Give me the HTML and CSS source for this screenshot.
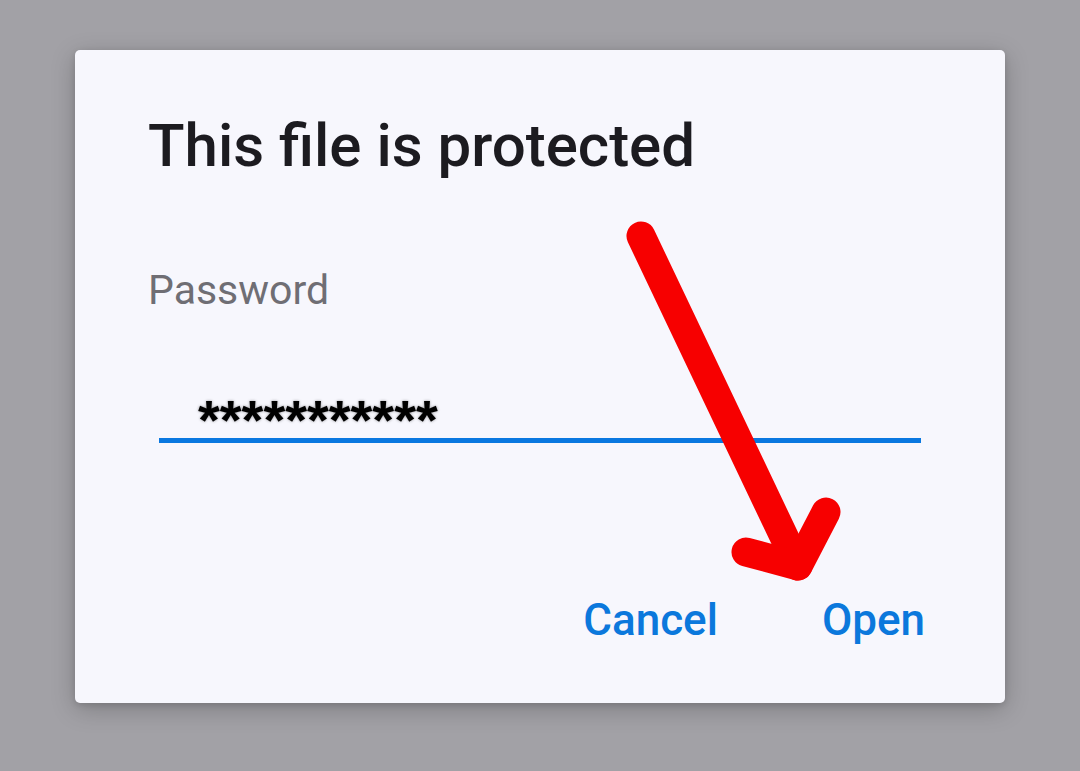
FILE: index.html
```html
<!DOCTYPE html>
<html>
<head>
<meta charset="utf-8">
<link rel="stylesheet" href="styles.css">
</head>
<body>
<div class="dialog">
  <h1 class="title">This file is protected</h1>
  <div class="label">Password</div>
  <div class="field"><span class="dots">***********</span></div>
  <div class="actions">
    <span class="btn">Cancel</span>
    <span class="btn">Open</span>
  </div>
</div>
<svg class="arrow" width="1080" height="771" viewBox="0 0 1080 771">
  <path d="M641 236 L798 566" />
  <path d="M746 552 L798 566 L826 512" />
</svg>
</body>
</html>
```
FILE: styles.css
```css
html, body {
  margin: 0;
  padding: 0;
}
body {
  width: 1080px;
  height: 771px;
  background: #a2a1a6;
  font-family: Roboto, "Liberation Sans", sans-serif;
  position: relative;
  overflow: hidden;
  padding: 50px 0 0 75px;
  box-sizing: border-box;
}
.dialog {
  width: 930px;
  height: 653px;
  box-sizing: border-box;
  background: #f7f7fd;
  border-radius: 5px;
  box-shadow: 0 6px 24px rgba(0, 0, 0, 0.22), 0 2px 6px rgba(0, 0, 0, 0.12);
  padding: 66px 80px 0 73px;
  display: flex;
  flex-direction: column;
}
.title {
  margin: 0;
  font-size: 60px;
  line-height: 60px;
  font-weight: 500;
  color: #1c1b20;
}
.label {
  margin-top: 92px;
  font-size: 41px;
  line-height: 44px;
  color: #6f6e74;
}
.field {
  margin: 76px 4px 0 11px;
  padding-left: 39px;
  border-bottom: 5px solid #0a78e0;
  height: 50px;
  display: flex;
  align-items: flex-end;
}
.dots {
  font-family: "Liberation Sans", Arial, sans-serif;
  font-weight: 700;
  font-size: 56px;
  line-height: 56px;
  color: #000;
  text-shadow: 0 0 3px rgba(0, 0, 0, 0.4);
  transform: translateY(10px);
}
.actions {
  margin-top: 155px;
  display: flex;
  justify-content: flex-end;
  gap: 104px;
}
.btn {
  font-size: 44px;
  line-height: 44px;
  font-weight: 500;
  color: #0b78dc;
}
.arrow {
  position: absolute;
  left: 0;
  top: 0;
  pointer-events: none;
}
.arrow path {
  fill: none;
  stroke: #f70000;
  stroke-width: 29;
  stroke-linecap: round;
  stroke-linejoin: round;
}
```
